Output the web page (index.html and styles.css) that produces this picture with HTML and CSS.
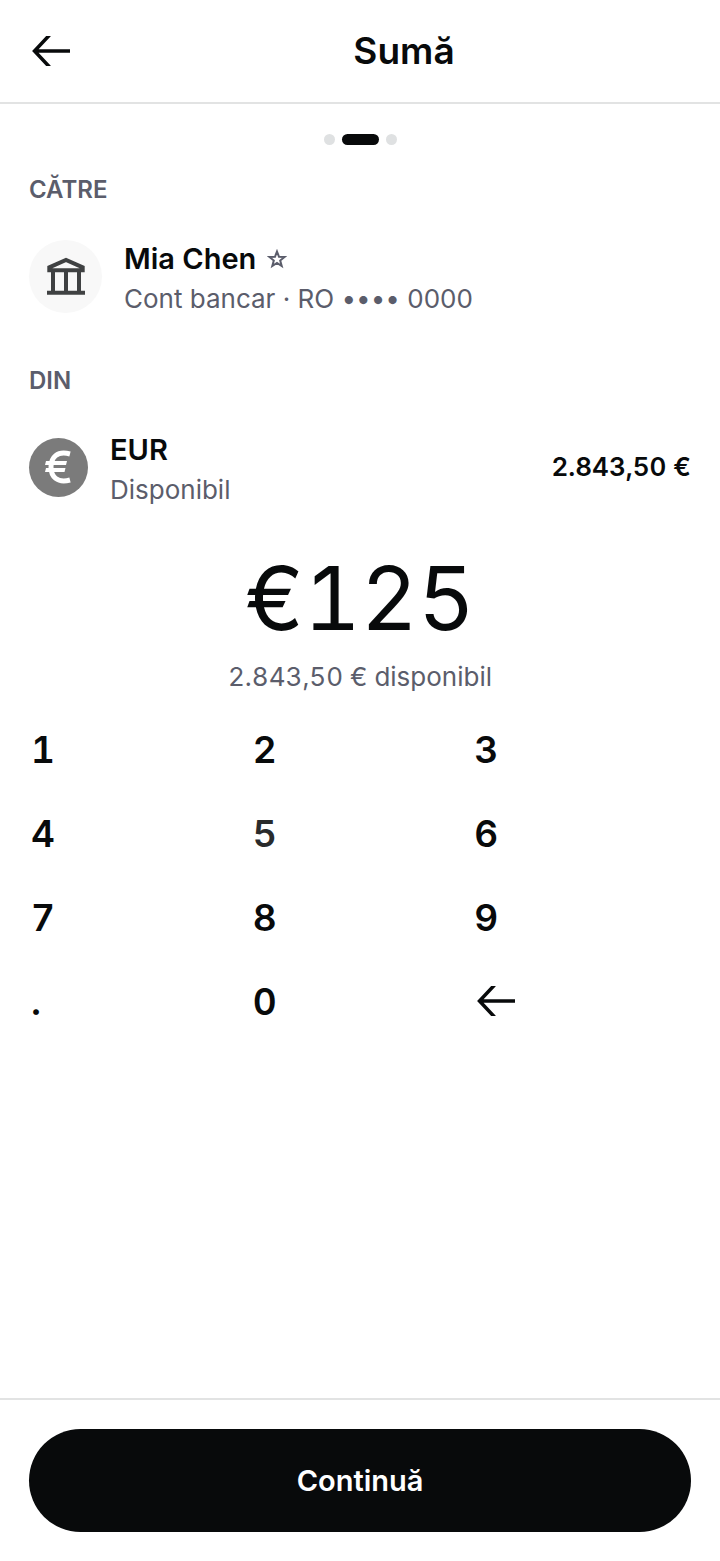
FILE: index.html
```html
<!DOCTYPE html>
<html lang="ro">
<head>
<meta charset="utf-8">
<meta name="viewport" content="width=device-width, initial-scale=1">
<title>Sumă</title>
<link rel="stylesheet" href="styles.css">
</head>
<body>
<div class="screen">
  <header class="topbar">
    <button class="back" type="button" aria-label="Înapoi">
      <svg class="arrow" viewBox="0 0 38 30" aria-hidden="true"><path d="M2.500 15H38M17.500-1L2.500 15l15 16"/></svg>
    </button>
    <h1 class="title">Sumă</h1>
  </header>
  <main class="content">
    <div class="steps"><span class="step"></span><span class="step step-active"></span><span class="step"></span></div>
    <section class="section">
      <h2 class="label">CĂTRE</h2>
      <div class="row">
        <span class="avatar">
          <svg class="bank" viewBox="0 0 38 38" aria-hidden="true"><path d="M2.300 13.300V10.300L19 3 35.700 10.300V13.300ZM6 13V35M19 13V35M32 13V35M0 35.700H38"/></svg>
        </span>
        <div class="info">
          <div class="name">Mia Chen <svg class="star" viewBox="0 0 20 21" aria-hidden="true"><path d="M10 2.500L12 7.750 17.600 8 13.200 11.550 14.700 17 10 13.900 5.300 17 6.800 11.550 2.400 8 8 7.750Z"/></svg></div>
          <div class="detail">Cont bancar · RO •••• 0000</div>
        </div>
      </div>
    </section>
    <section class="section">
      <h2 class="label">DIN</h2>
      <div class="row">
        <span class="coin"><svg class="euro" viewBox="0 0 28 34" aria-hidden="true"><path d="M25 4C12 .500 6 7.500 6 17s6 16.500 19 13"/><path class="euro-bar" d="M1 11H22L21 15H0ZM1 18H20.500L19.500 22H0Z"/></svg></span>
        <div class="info">
          <div class="name">EUR</div>
          <div class="detail">Disponibil</div>
        </div>
        <div class="balance">2.843,50 €</div>
      </div>
    </section>
    <div class="amount">€125</div>
    <div class="available">2.843,50 € disponibil</div>
    <div class="keypad">
      <button class="key" type="button">1</button>
      <button class="key" type="button">2</button>
      <button class="key" type="button">3</button>
      <button class="key" type="button">4</button>
      <button class="key key-pressed" type="button">5</button>
      <button class="key" type="button">6</button>
      <button class="key" type="button">7</button>
      <button class="key" type="button">8</button>
      <button class="key" type="button">9</button>
      <button class="key" type="button">.</button>
      <button class="key" type="button">0</button>
      <button class="key key-icon" type="button" aria-label="Șterge">
        <svg class="arrow" viewBox="0 0 38 30" aria-hidden="true"><path d="M2.500 15H38M17.500-1L2.500 15l15 16"/></svg>
      </button>
    </div>
  </main>
  <footer class="footer">
    <button class="continue" type="button">Continuă</button>
  </footer>
</div>
</body>
</html>
```
FILE: styles.css
```css
* { box-sizing: border-box; }
body {
  margin: 0;
  background: #fff;
  color: #080a0b;
  font-family: Inter, "Liberation Sans", sans-serif;
}
button {
  border: 0;
  padding: 0;
  background: none;
  color: inherit;
  font: inherit;
  cursor: pointer;
}
.screen { display: flex; flex-direction: column; min-height: 100vh; }
.topbar {
  display: flex;
  align-items: center;
  height: 104px;
  padding: 0 29px;
  border-bottom: 2px solid #e2e3e3;
}
.back { display: flex; align-items: center; width: 88px; height: 80px; padding-left: 3px; }
.arrow { width: 38px; height: 30px; fill: none; stroke: currentColor; stroke-width: 3.500; }
.title { flex: 1; margin: 0; font-size: 37px; line-height: 48px; font-weight: 600; text-align: center; }
.content { flex: 1; padding: 30px 29px 0; }
.steps { display: flex; justify-content: center; gap: 7px; }
.step { width: 11px; height: 11px; border-radius: 6px; background: #dfe1e2; }
.step-active { width: 37px; background: #080a0b; }
.section { padding-top: 29px; }
.label { margin: 0; font-size: 24px; line-height: 32px; font-weight: 600; color: #5b5d6b; }
.row { display: flex; align-items: center; gap: 22px; height: 130px; padding-top: 10px; }
.avatar, .coin { display: flex; align-items: center; justify-content: center; flex: none; border-radius: 50%; }
.avatar { width: 73px; height: 73px; background: #f8f8f8; }
.bank { width: 38px; height: 38px; fill: none; stroke: #3f4142; stroke-width: 4; }
.coin { width: 59px; height: 59px; background: #7b7b7b; }
.euro { width: 28px; height: 34px; fill: none; stroke: #fff; stroke-width: 5; }
.euro-bar { fill: #fff; stroke: none; }
.info { flex: 1; padding-top: 6px; }
.name { display: flex; align-items: center; gap: 11px; font-size: 29px; line-height: 40px; font-weight: 600; }
.star { width: 20px; height: 21px; fill: none; stroke: #5b5d6b; stroke-width: 2; }
.detail { font-size: 26px; line-height: 40px; color: #5b5d6b; font-feature-settings: "calt" 0; }
.balance { font-size: 26px; line-height: 40px; font-weight: 600; font-variant-numeric: tabular-nums; }
.amount { margin-top: 18px; font-size: 88px; line-height: 106px; text-align: center; font-variant-numeric: tabular-nums; }
.available { margin-top: 6px; font-size: 26px; line-height: 40px; text-align: center; color: #5b5d6b; font-variant-numeric: tabular-nums; }
.keypad { display: grid; grid-template-columns: repeat(3, 1fr); grid-auto-rows: 84px; column-gap: 3px; margin-top: 10px; }
.key { display: flex; align-items: center; padding-left: 2px; font-size: 37px; font-weight: 600; font-variant-numeric: tabular-nums; }
.key-icon { padding-left: 5px; }
.key-pressed { color: #292b2c; }
.footer { padding: 29px; border-top: 2px solid #e2e3e3; }
.continue { display: block; width: 100%; height: 103px; border-radius: 52px; background: #080a0b; color: #fff; font-size: 29px; font-weight: 600; }
```
